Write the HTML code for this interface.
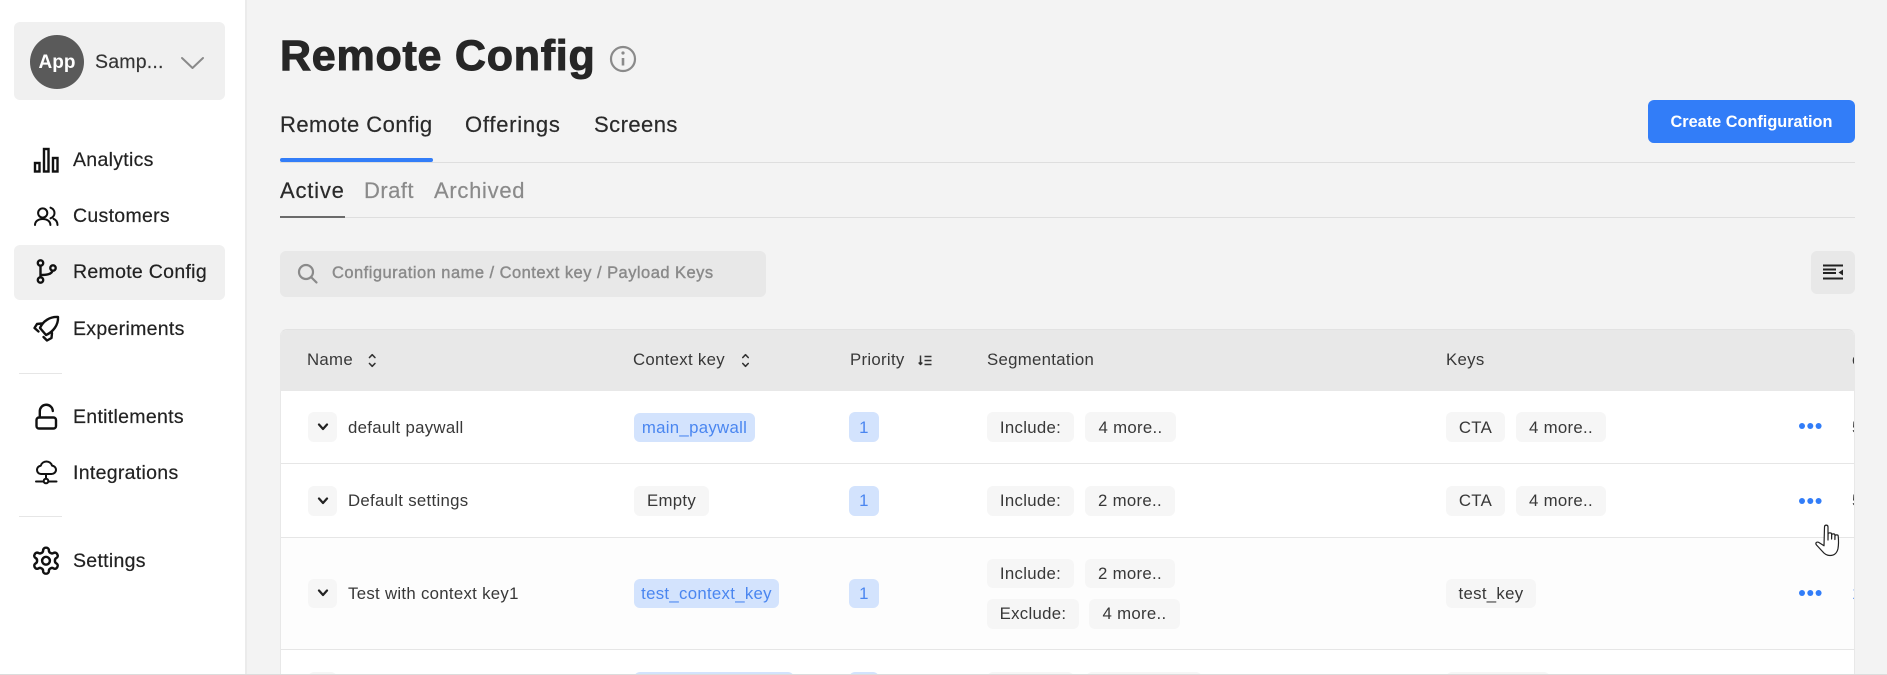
<!DOCTYPE html>
<html lang="en"><head><meta charset="utf-8"><title>Remote Config</title>
<style>
*{box-sizing:border-box;margin:0;padding:0}
html,body{width:1887px;height:675px;overflow:hidden;background:#f3f3f3;font-family:"Liberation Sans",sans-serif;color:#2a2a2a}
.a{position:absolute;white-space:nowrap}
#side{position:absolute;left:0;top:0;width:247px;height:675px;background:#fff;border-right:2px solid #ebebeb}
.nav{position:absolute;left:73px;height:30px;line-height:30px;font-size:19.5px;letter-spacing:.3px;color:#222;white-space:nowrap;-webkit-text-stroke:.2px #222}
.sel{position:absolute;left:14px;width:211px;background:#f0f0f0;border-radius:6px}
.dv{position:absolute;left:19px;width:43px;height:1px;background:#e6e6e6}
.tab{position:absolute;height:30px;line-height:30px;font-size:22px;letter-spacing:.45px;white-space:nowrap;-webkit-text-stroke:.2px currentColor}
.line{position:absolute;height:1px;background:#dedede}
#tbl{position:absolute;left:280px;top:329px;width:1575px;height:346px;background:#fff;border-left:1px solid #e8e8e8;border-right:1px solid #e8e8e8;border-top:1px solid #e2e2e2;border-radius:7px 7px 0 0;overflow:hidden}
#tbl .hd{position:absolute;left:0;top:0;right:0;height:61px;background:#e8e8e8}
.rl{position:absolute;left:0;right:0;height:1px;background:#e6e6e6}
.t{position:absolute;height:30px;line-height:30px;font-size:16.8px;letter-spacing:.3px;color:#383838;white-space:nowrap}
.c{position:absolute;height:30px;line-height:30px;font-size:16.8px;letter-spacing:.3px;color:#383838;background:#f6f6f6;border-radius:6px;text-align:center;white-space:nowrap}
.b{background:#d3e3fd;color:#4a86f0}
</style></head><body>
<div id="side">
 <div class="sel" style="top:22px;height:78px"></div>
 <div class="a" style="left:30px;top:35px;width:54px;height:54px;border-radius:50%;background:#5a5a5a;color:#fff;font-weight:700;font-size:19px;line-height:55px;text-align:center">App</div>
 <div class="a" style="left:95px;top:47px;height:30px;line-height:30px;font-size:19.500px;letter-spacing:.2px;color:#333;-webkit-text-stroke:.15px #333">Samp...</div>
 <div class="nav" style="top:145px">Analytics</div>
 <div class="nav" style="top:201px">Customers</div>
 <div class="sel" style="top:245px;height:55px"></div>
 <div class="nav" style="top:257px">Remote Config</div>
 <div class="nav" style="top:314px">Experiments</div>
 <div class="dv" style="top:373px"></div>
 <div class="nav" style="top:402px">Entitlements</div>
 <div class="nav" style="top:458px">Integrations</div>
 <div class="dv" style="top:516px"></div>
 <div class="nav" style="top:546px">Settings</div>
</div>

<div class="a" style="left:280px;top:30px;height:52px;line-height:52px;font-size:43px;font-weight:700;letter-spacing:.75px;color:#262626;-webkit-text-stroke:1px #262626">Remote Config</div>

<div class="tab" style="left:280px;top:110px;color:#2a2a2a">Remote Config</div>
<div class="tab" style="left:465px;top:110px;color:#2a2a2a;letter-spacing:.75px">Offerings</div>
<div class="tab" style="left:594px;top:110px;color:#2a2a2a">Screens</div>
<div class="line" style="left:280px;top:162px;width:1575px"></div>
<div class="a" style="left:280px;top:158px;width:153px;height:4px;background:#327df8;border-radius:2px"></div>

<div class="tab" style="left:280px;top:176px;color:#2a2a2a;letter-spacing:.8px">Active</div>
<div class="tab" style="left:364px;top:176px;color:#8a8a8a">Draft</div>
<div class="tab" style="left:434px;top:176px;color:#8a8a8a;letter-spacing:.7px">Archived</div>
<div class="line" style="left:280px;top:217px;width:1575px"></div>
<div class="a" style="left:280px;top:216px;width:65px;height:2px;background:#6a6a6a"></div>

<div class="a" style="left:280px;top:251px;width:486px;height:46px;background:#e8e8e8;border-radius:6px"></div>
<div class="a" style="left:332px;top:258px;height:30px;line-height:30px;font-size:16.500px;letter-spacing:.47px;color:#8a8a8a;-webkit-text-stroke:.4px #8a8a8a">Configuration name / Context key / Payload Keys</div>

<div class="a" style="left:1648px;top:100px;width:207px;height:43px;background:#327df8;border-radius:6px;color:#fff;font-weight:700;font-size:16.300px;line-height:44px;text-align:center">Create Configuration</div>
<div class="a" style="left:1811px;top:251px;width:44px;height:43px;background:#e8e8e8;border-radius:6px"></div>

<div id="tbl">
 <div class="hd"></div>
 <div class="t" style="left:26px;top:15px">Name</div>
 <div class="t" style="left:352px;top:15px">Context key</div>
 <div class="t" style="left:569px;top:15px">Priority</div>
 <div class="t" style="left:706px;top:15px">Segmentation</div>
 <div class="t" style="left:1165px;top:15px">Keys</div>
 <div class="t" style="left:1571px;top:15px">c</div>

 <div class="rl" style="top:133px"></div>
 <div class="rl" style="top:207px"></div>
 <div class="a" style="left:0;right:0;top:208px;height:111px;background:#fdfdfd"></div>
 <div class="rl" style="top:319px"></div>

 <!-- row 1 -->
 <div class="c" style="left:27px;top:82px;width:29px"></div>
 <div class="t" style="left:67px;top:83px">default paywall</div>
 <div class="c b" style="left:353px;top:83px;width:121px;height:29px">main_paywall</div>
 <div class="c b" style="left:568px;top:82px;width:30px;line-height:31px">1</div>
 <div class="c" style="left:706px;top:82px;width:87px;line-height:31px">Include:</div>
 <div class="c" style="left:804px;top:82px;width:91px;line-height:31px">4 more..</div>
 <div class="c" style="left:1165px;top:82px;width:59px;line-height:31px">CTA</div>
 <div class="c" style="left:1235px;top:82px;width:90px;line-height:31px">4 more..</div>
 <div class="t" style="left:1571px;top:83px">5</div>

 <!-- row 2 -->
 <div class="c" style="left:27px;top:156px;width:29px"></div>
 <div class="t" style="left:67px;top:156px">Default settings</div>
 <div class="c" style="left:353px;top:156px;width:75px">Empty</div>
 <div class="c b" style="left:568px;top:156px;width:30px">1</div>
 <div class="c" style="left:706px;top:156px;width:87px">Include:</div>
 <div class="c" style="left:804px;top:156px;width:90px">2 more..</div>
 <div class="c" style="left:1165px;top:156px;width:59px">CTA</div>
 <div class="c" style="left:1235px;top:156px;width:90px">4 more..</div>
 <div class="t" style="left:1571px;top:156px">5</div>

 <!-- row 3 -->
 <div class="c" style="left:27px;top:249px;width:29px;height:29px"></div>
 <div class="t" style="left:67px;top:249px">Test with context key1</div>
 <div class="c b" style="left:353px;top:249px;width:145px;height:29px;line-height:30px">test_context_key</div>
 <div class="c b" style="left:568px;top:249px;width:30px;height:29px;line-height:30px">1</div>
 <div class="c" style="left:706px;top:229px;width:87px;height:29px;line-height:30px">Include:</div>
 <div class="c" style="left:804px;top:229px;width:90px;height:29px;line-height:30px">2 more..</div>
 <div class="c" style="left:706px;top:269px;width:92px">Exclude:</div>
 <div class="c" style="left:808px;top:269px;width:91px">4 more..</div>
 <div class="c" style="left:1165px;top:249px;width:90px;height:29px;line-height:30px">test_key</div>
 <div class="t" style="left:1571px;top:249px;color:#4a86f0">1</div>

 <!-- row 4 (cut off) -->
 <div class="c" style="left:27px;top:342px;width:29px"></div>
 <div class="c b" style="left:353px;top:342px;width:160px"></div>
 <div class="c b" style="left:568px;top:342px;width:30px"></div>
 <div class="c" style="left:706px;top:342px;width:87px"></div>
 <div class="c" style="left:805px;top:342px;width:116px"></div>
 <div class="c" style="left:1165px;top:342px;width:104px"></div>
</div>

<div class="a" style="left:0;top:674px;width:1887px;height:1px;background:#dcdcdc"></div>

<svg class="a" style="left:0;top:0" width="1887" height="675" viewBox="0 0 1887 675" fill="none" stroke="#111" stroke-width="2.400" stroke-linecap="round" stroke-linejoin="round">
 <!-- app chevron -->
 <path d="M182 58l10.500 10 10.500-10" stroke="#8a8a8a" stroke-width="2"/>
 <!-- analytics -->
 <rect x="35" y="163" width="4.500" height="8.500" stroke-linejoin="miter"/><rect x="44" y="149" width="4.500" height="22.500" stroke-linejoin="miter"/><rect x="53" y="158" width="4.500" height="13.500" stroke-linejoin="miter"/>
 <!-- customers -->
 <g stroke-width="2">
 <circle cx="42.700" cy="213" r="4.600"/>
 <path d="M35 225c0-3.500 3-6 7.700-6s7.700 2.500 7.700 6"/>
 <path d="M50.500 207.700c2.500 1 4 3 4 5.300s-1.500 4.300-4 5.300M53.500 218.800c2.500 1 4 3.300 4 6.200"/>
 </g>
 <!-- remote config / branch -->
 <circle cx="40.500" cy="263" r="2.700"/><circle cx="40.500" cy="280" r="2.700"/><circle cx="53" cy="268" r="2.700"/>
 <path d="M40.500 266v11M40.500 275c6 0 11-.5 12-4.300"/>
 <!-- experiments / rocket -->
 <path d="M58 317C50 316.500 43 321 40 328l6 7c7-3 12.500-10 12-18z"/>
 <path d="M41.500 323.500l-4.500.5-2.500 4 4 3.500M52 333l-.5 5-4.500 2.500-3.500-3.500"/>
 <!-- entitlements / lock -->
 <rect x="36.500" y="417.500" width="19.500" height="11" rx="2.500"/>
 <path d="M39.800 417v-5.500a6.500 6.500 0 0 1 13-.5"/>
 <!-- integrations / cloud -->
 <g stroke-width="2">
 <path d="M46 478.500V474M41 474h10.500c2.500 0 4.500-2 4.500-4.200s-1.800-4-4-4.200c-.8-2.500-3-4.100-5.600-4.100s-5 1.600-5.600 4.200c-2.200.2-3.800 2-3.800 4.200s1.700 4.100 4 4.100z"/>
 <circle cx="46" cy="481" r="2.300"/>
 <path d="M36 481.500h7.500M48.500 481.500H56.500"/>
 </g>
 <!-- settings / gear -->
 <g transform="translate(30.400 545.100) scale(1.300)" stroke-width="1.900">
  <path d="M12.220 2h-.44a2 2 0 0 0-2 2v.18a2 2 0 0 1-1 1.730l-.43.250a2 2 0 0 1-2 0l-.15-.08a2 2 0 0 0-2.730.730l-.22.380a2 2 0 0 0 .730 2.730l.150.100a2 2 0 0 1 1 1.720v.510a2 2 0 0 1-1 1.740l-.15.090a2 2 0 0 0-.73 2.730l.22.380a2 2 0 0 0 2.730.730l.150-.08a2 2 0 0 1 2 0l.430.250a2 2 0 0 1 1 1.730V20a2 2 0 0 0 2 2h.440a2 2 0 0 0 2-2v-.18a2 2 0 0 1 1-1.730l.430-.25a2 2 0 0 1 2 0l.150.080a2 2 0 0 0 2.730-.73l.220-.39a2 2 0 0 0-.73-2.730l-.15-.08a2 2 0 0 1-1-1.740v-.5a2 2 0 0 1 1-1.740l.150-.09a2 2 0 0 0 .730-2.730l-.22-.38a2 2 0 0 0-2.730-.73l-.15.080a2 2 0 0 1-2 0l-.43-.25a2 2 0 0 1-1-1.730V4a2 2 0 0 0-2-2z"/>
  <circle cx="12" cy="12" r="3"/>
 </g>
 <!-- info -->
 <circle cx="623" cy="59" r="12" stroke="#8a8a8a" stroke-width="2.200"/>
 <path d="M623 58v7.500" stroke="#8a8a8a" stroke-width="2.600" stroke-linecap="butt"/>
 <circle cx="623" cy="53" r="1.600" fill="#8a8a8a" stroke="none"/>
 <!-- search -->
 <circle cx="306" cy="272" r="7" stroke="#8a8a8a" stroke-width="2.200"/>
 <path d="M311 277l5.500 5.500" stroke="#8a8a8a" stroke-width="2.200"/>
 <!-- filter icon -->
 <path d="M1823 265.500h20M1823 269.500h13M1823 273h13M1823 278.500h20" stroke="#222" stroke-width="2" stroke-linecap="butt"/>
 <path d="M1843 269.500v6l-4.500-3z" fill="#222" stroke="none"/>
 <!-- sort icons -->
 <path d="M369.500 357.500l2.700-2.800 2.700 2.800M369.500 363.500l2.700 2.800 2.700-2.800M742.800 357.500l2.700-2.800 2.700 2.800M742.800 363.500l2.700 2.800 2.700-2.800" stroke="#333" stroke-width="1.600"/>
 <path d="M920.500 355.500v9M918.700 362.500l1.800 2 1.800-2M924.500 356.500h7M924.500 360.500h7M924.500 364.500h7" stroke="#333" stroke-width="1.500" stroke-linecap="butt"/>
 <!-- row chevrons -->
 <path d="M319 424.500l4 4.500 4-4.500M319 498.500l4 4.500 4-4.500M319 590.500l4 4.500 4-4.500" stroke="#222" stroke-width="2.200"/>
 <!-- dots -->
 <g fill="#327df8" stroke="none">
  <circle cx="1802" cy="426" r="3"/><circle cx="1810.300" cy="426" r="3"/><circle cx="1818.600" cy="426" r="3"/>
  <circle cx="1802" cy="501" r="3"/><circle cx="1810.300" cy="501" r="3"/><circle cx="1818.600" cy="501" r="3"/>
  <circle cx="1802" cy="593" r="3"/><circle cx="1810.300" cy="593" r="3"/><circle cx="1818.600" cy="593" r="3"/>
 </g>
 <!-- hand cursor -->
 <path d="M1824.500 527c0-2.500 3.500-2.500 3.500 0v13l.1-6c0-1.500 3.500-1.500 3.500 0v5l.1-4c0-1.500 3.200-1.500 3.200 0v4.500l.1-3.500c0-1.500 3.200-1.500 3.200 0 .5 5 .4 9-.2 12.500-.8 4-3.500 7-8 7-3.500 0-5.500-1.500-7.500-4l-6-6.500c-1.500-2 0-3.500 2-2.700l5.500 3.500z" fill="#fff" stroke="#222" stroke-width="1.200"/>
</svg>
</body></html>
